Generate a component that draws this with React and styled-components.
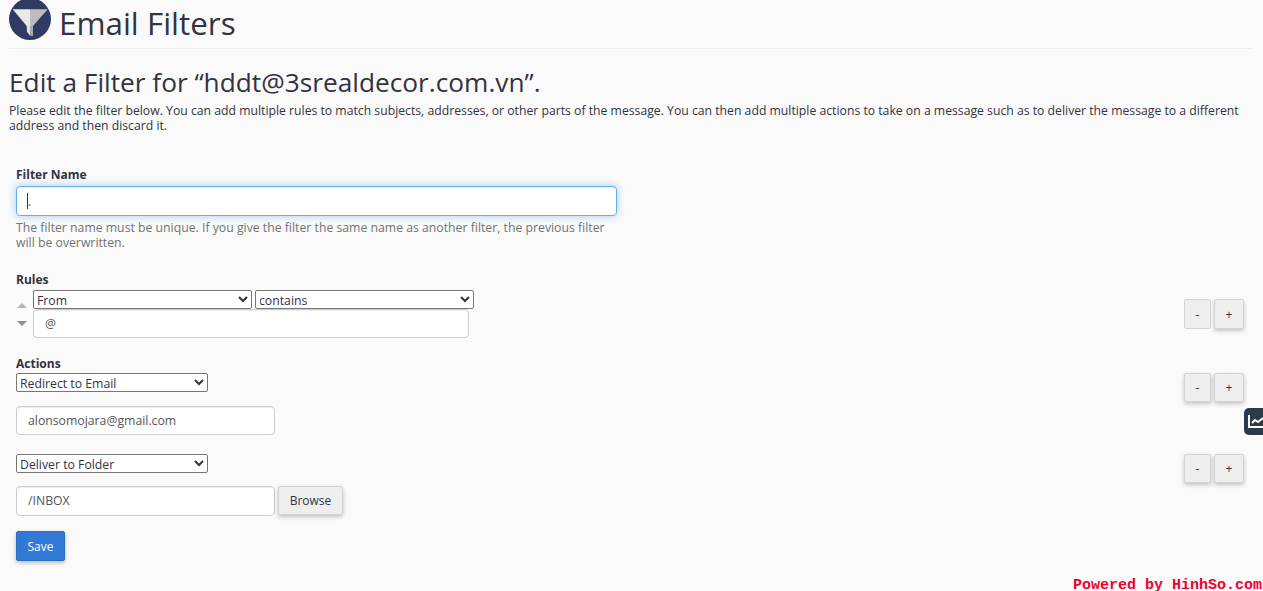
import React from "react";
import styled, { createGlobalStyle } from "styled-components";

const Global = createGlobalStyle`
  html, body { margin: 0; padding: 0; background: #fafafa; height: 100%; overflow: hidden; }
  body { font-family: "Open Sans", sans-serif; font-size: 12.22px; line-height: 1.42857; color: #33333f; }
`;

const Page = styled.div`
  height: 591px;
  box-sizing: border-box;
  padding: 0 11px 0 9px;
  position: relative;
  overflow: hidden;
`;
const Header = styled.header`
  display: flex;
  align-items: center;
  gap: 8px;
  height: 48px;
  border-bottom: 1px solid #eeeeee;
`;
const Logo = styled.svg`
  width: 42px;
  height: 42px;
  margin-top: -11px;
  flex: none;
`;
const Title = styled.h1`
  margin: -2px 0 0;
  font-size: 31.4px;
  font-weight: 400;
  line-height: 48px;
  color: #33333f;
`;
const SubTitle = styled.h2`
  margin: 17px 0 0;
  font-size: 26.25px;
  font-weight: 400;
  line-height: 33px;
  color: #33333f;
`;
const Intro = styled.p`
  margin: 4px 0 0;
  font-size: 12.22px;
  line-height: 15px;
  color: #33333f;
`;
const Form = styled.form`
  padding: 33px 8px 0 7px;
  display: flex;
  flex-direction: column;
`;
const Label = styled.div`
  font-size: 12px;
  font-weight: 700;
  line-height: 17px;
  color: #33333f;
`;
const NameField = styled.div`
  position: relative;
  width: 601px;
  margin-top: 3px;
`;
const TextInput = styled.input`
  display: block;
  box-sizing: border-box;
  width: ${(p) => p.$w}px;
  height: ${(p) => p.$h}px;
  padding: 0 11px ${(p) => p.$pb || 0}px;
  border: 1px solid ${(p) => (p.$focus ? "#66afe9" : "#cccccc")};
  border-radius: 4px;
  background: #fff;
  font: 12.25px "Open Sans", sans-serif;
  color: #555;
  outline: none;
  box-shadow: ${(p) =>
    p.$focus
      ? "inset 0 1px 1px rgba(0,0,0,.075), 0 0 8px rgba(102,175,233,.6)"
      : "inset 0 1px 1px rgba(0,0,0,.075)"};
`;
const Caret = styled.span`
  position: absolute;
  left: 11px;
  top: 7px;
  width: 1px;
  height: 16px;
  background: #33333f;
`;
const Help = styled.p`
  margin: 4px 0 0;
  width: 600px;
  font-size: 12.25px;
  line-height: 15px;
  color: #737373;
`;
const RulesLabel = styled(Label)`
  margin: 21px 0 2px;
`;
const Row = styled.div`
  display: flex;
  justify-content: space-between;
  align-items: flex-start;
  margin-top: ${(p) => p.$mt || 0}px;
`;
const RuleBody = styled.div`
  display: flex;
  gap: 3px;
`;
const Arrows = styled.div`
  display: flex;
  flex-direction: column;
  gap: 13px;
  width: 14px;
  padding-top: 13px;
`;
const Arrow = styled.span`
  width: 0;
  height: 0;
  margin-left: 1px;
  border-left: 5px solid transparent;
  border-right: 5px solid transparent;
  ${(p) =>
    p.$up
      ? "border-bottom: 5px solid #b5b5b5;"
      : "border-top: 5px solid #8f8f8f;"}
`;
const RuleFields = styled.div`
  display: flex;
  flex-direction: column;
`;
const SelectRow = styled.div`
  display: flex;
  gap: 3px;
`;
const Select = styled.select`
  display: block;
  box-sizing: border-box;
  width: ${(p) => p.$w}px;
  height: 19px;
  padding: 0 0 2px;
  text-indent: -1px;
  font: 12.25px "Open Sans", sans-serif;
  color: #33333f;
  background: #fff;
  border: 1px solid #767676;
  border-radius: 2px;
`;
const Buttons = styled.div`
  display: flex;
  gap: 3px;
  margin-top: ${(p) => p.$mt || 0}px;
`;
const SmallButton = styled.button`
  box-sizing: border-box;
  width: ${(p) => p.$w}px;
  height: ${(p) => p.$h}px;
  padding: 0;
  border: 1px solid #d4d4d4;
  border-radius: 2px;
  background: #eeeeee;
  font: 12px "Open Sans", sans-serif;
  color: #33333f;
  box-shadow: ${(p) => (p.$flat ? "none" : "0 2px 4px rgba(0,0,0,.22)")};
`;
const ActionsLabel = styled(Label)`
  margin: 17px 0 1px;
`;
const ActionBlock = styled.div`
  display: flex;
  flex-direction: column;
`;
const Spaced = styled.div`
  margin-top: ${(p) => p.$mt}px;
  display: flex;
  gap: 3px;
  align-items: flex-start;
`;
const BrowseButton = styled(SmallButton)`
  width: 65px;
  height: 29px;
`;
const SaveButton = styled.button`
  align-self: flex-start;
  box-sizing: border-box;
  width: 49px;
  height: 30px;
  margin-top: 15px;
  padding: 0;
  border: 1px solid #2a6fbe;
  border-radius: 2px;
  background: #3079d6;
  color: #fff;
  font: 12px "Open Sans", sans-serif;
  box-shadow: 0 2px 4px rgba(0,0,0,.25);
`;
const StatsTab = styled.div`
  position: absolute;
  right: 0;
  top: 408px;
  width: 19px;
  height: 27px;
  background: #293a4a;
  border-radius: 5px 0 0 5px;
  overflow: hidden;
`;
const StatsIcon = styled.svg`
  position: absolute;
  left: 4px;
  top: 7px;
  width: 16px;
  height: 14px;
`;
const Watermark = styled.div`
  position: absolute;
  right: 1px;
  bottom: 0;
  font: 700 15px/10px "Liberation Mono", monospace;
  color: #f00030;
`;

const Pair = ({ flat, mt, h }) => (
  <Buttons $mt={mt}>
    <SmallButton type="button" $w={27} $h={h} $flat={flat}>-</SmallButton>
    <SmallButton type="button" $w={30} $h={h}>+</SmallButton>
  </Buttons>
);

export default function App() {
  return (
    <Page>
      <Global />
      <Header>
        <Logo viewBox="0 0 42 42">
          <circle cx="21" cy="21" r="21" fill="#2f3b62" />
          <path d="M3.7 11.3H21V28H17.7Z" fill="#e9e9e9" />
          <path d="M21 11.3H38.7L24 28H21Z" fill="#bdbdbd" />
          <path d="M17.7 28H21.5V38L18 34Z" fill="#e2e2e2" />
          <path d="M21 28H24V38H21.5Z" fill="#a9a9a9" />
        </Logo>
        <Title>Email Filters</Title>
      </Header>
      <SubTitle>Edit a Filter for “hddt@3srealdecor.com.vn”.</SubTitle>
      <Intro>
        Please edit the filter below. You can add multiple rules to match subjects, addresses, or other parts of the
        message. You can then add multiple actions to take on a message such as to deliver the message to a different
        address and then discard it.
      </Intro>
      <Form onSubmit={(e) => e.preventDefault()}>
        <Label>Filter Name</Label>
        <NameField>
          <TextInput $w={601} $h={30} $focus defaultValue="." readOnly />
          <Caret />
        </NameField>
        <Help>
          The filter name must be unique. If you give the filter the same name as another filter, the previous filter
          will be overwritten.
        </Help>

        <RulesLabel>Rules</RulesLabel>
        <Row>
          <RuleBody>
            <Arrows>
              <Arrow $up />
              <Arrow />
            </Arrows>
            <RuleFields>
              <SelectRow>
                <Select $w={219} defaultValue="From">
                  <option>From</option>
                  <option>Subject</option>
                  <option>To</option>
                </Select>
                <Select $w={219} defaultValue="contains">
                  <option>contains</option>
                  <option>matches regex</option>
                </Select>
              </SelectRow>
              <TextInput $w={436} $h={29} defaultValue="@" />
            </RuleFields>
          </RuleBody>
          <Pair flat mt={9} h={30} />
        </Row>

        <ActionsLabel>Actions</ActionsLabel>
        <Row>
          <ActionBlock>
            <Select $w={192} defaultValue="Redirect to Email">
              <option>Redirect to Email</option>
              <option>Deliver to Folder</option>
            </Select>
            <Spaced $mt={14}>
              <TextInput $w={259} $h={29} defaultValue="alonsomojara@gmail.com" />
            </Spaced>
          </ActionBlock>
          <Pair h={29} />
        </Row>
        <Row $mt={19}>
          <ActionBlock>
            <Select $w={192} defaultValue="Deliver to Folder">
              <option>Redirect to Email</option>
              <option>Deliver to Folder</option>
            </Select>
            <Spaced $mt={13}>
              <TextInput $w={259} $h={30} $pb={2} defaultValue="/INBOX" />
              <BrowseButton type="button">Browse</BrowseButton>
            </Spaced>
          </ActionBlock>
          <Pair h={29} />
        </Row>
        <SaveButton type="submit">Save</SaveButton>
      </Form>
      <StatsTab>
        <StatsIcon viewBox="0 0 16 14" fill="none" stroke="#fff" strokeWidth="2">
          <path d="M1 0V12H16" />
          <path d="M4 8L7 5L10 7L15 3" />
        </StatsIcon>
      </StatsTab>
      <Watermark>Powered by HinhSo.com</Watermark>
    </Page>
  );
}
